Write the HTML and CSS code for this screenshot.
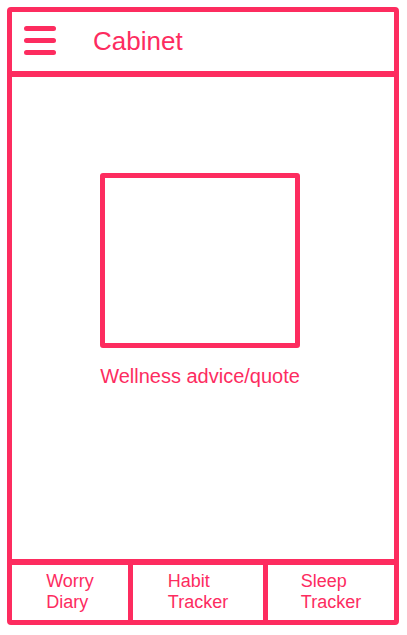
FILE: index.html
```html
<!DOCTYPE html>
<html lang="en">

<head>
    <meta charset="UTF-8">
    <meta name="viewport" content="width=device-width, initial-scale=1.0">
    <title>Cabinet</title>
    <link rel="stylesheet" href="styles.css">
</head>

<body>
    <div class="phone">
        <!-- Top bar -->
        <header class="top-bar">
            <div class="menu-icon">
                <span></span>
                <span></span>
                <span></span>
            </div>
            <h1>Cabinet</h1>
        </header>

        <!-- Main content -->
        <main class="content">
            <div class="quote-box"></div>
            <p class="quote-text">Wellness advice/quote</p>
        </main>

        <!-- Bottom tabs -->
        <nav class="tabs">
            <a class="tab"><span>Worry<br>Diary</span></a>
            <a class="tab"><span>Habit<br>Tracker</span></a>
            <a class="tab"><span>Sleep<br>Tracker</span></a>
        </nav>
    </div>
</body>

</html>
```

FILE: styles.css
```css
body {
    margin: 0;
    background: #fff;
    font-family: "Liberation Sans", Arial, sans-serif;
    color: #fd2c5f;
}

.phone {
    margin: 7px 0 0 7px;
    width: 392px;
    height: 618px;
    box-sizing: border-box;
    border: 5px solid #fd2c5f;
    border-radius: 4px;
    display: flex;
    flex-direction: column;
}

.top-bar {
    height: 65px;
    box-sizing: border-box;
    border-bottom: 6px solid #fd2c5f;
    display: flex;
    align-items: center;
    padding: 0 0 0 12px;
}

.menu-icon {
    display: flex;
    flex-direction: column;
    gap: 7px;
    width: 32px;
    margin-bottom: 2px;
}

.menu-icon span {
    height: 5px;
    background: #fd2c5f;
    border-radius: 3px;
}

.top-bar h1 {
    margin: 0 0 0 37px;
    font-size: 26px;
    font-weight: normal;
}

.content {
    flex: 1;
    display: flex;
    flex-direction: column;
    align-items: center;
    padding: 96px 6px 0 0;
}

.quote-box {
    width: 200px;
    height: 175px;
    box-sizing: border-box;
    border: 5px solid #fd2c5f;
    border-radius: 3px;
}

.quote-text {
    margin: 17px 0 0;
    font-size: 20px;
    line-height: 23px;
}

.tabs {
    height: 61px;
    box-sizing: border-box;
    border-top: 6px solid #fd2c5f;
    display: grid;
    grid-template-columns: 116px 135px 1fr;
}

.tab {
    display: flex;
    align-items: center;
    justify-content: center;
    padding-bottom: 1px;
    font-size: 18px;
    line-height: 21px;
}

.tab + .tab {
    border-left: 5px solid #fd2c5f;
}

.tab span {
    text-align: left;
}
```
